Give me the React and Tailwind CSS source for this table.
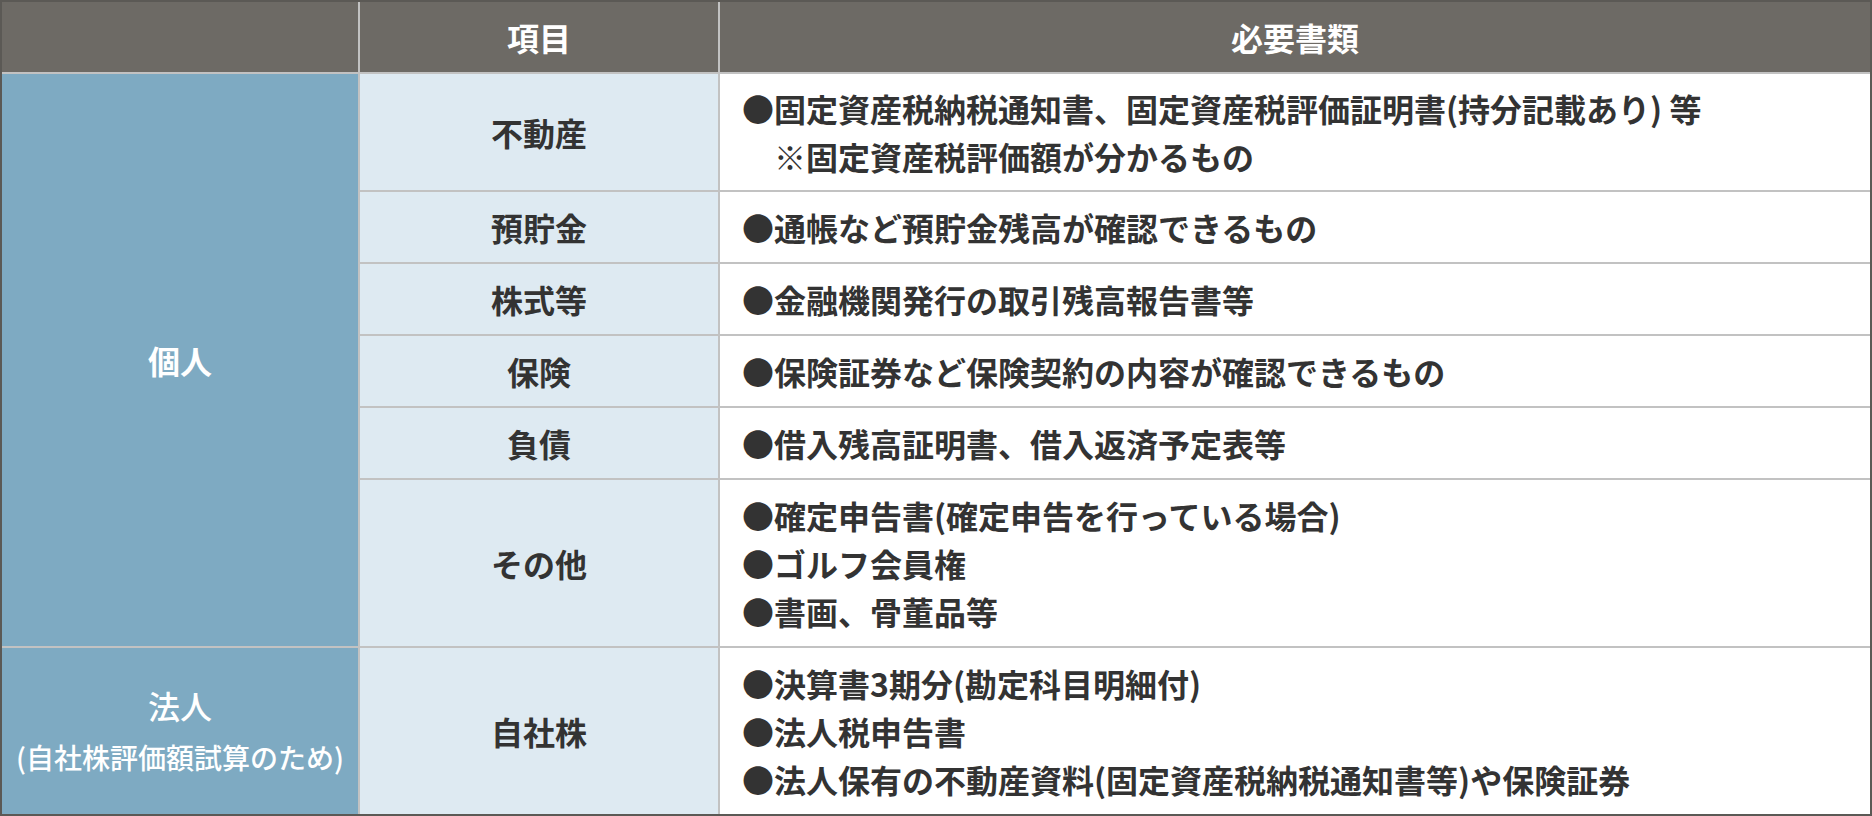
import React from "react";

const rows = [
  {
    item: "不動産",
    docs: [
      { text: "●固定資産税納税通知書、固定資産税評価証明書(持分記載あり) 等" },
      { text: "※固定資産税評価額が分かるもの", indent: true },
    ],
  },
  { item: "預貯金", docs: [{ text: "●通帳など預貯金残高が確認できるもの" }] },
  { item: "株式等", docs: [{ text: "●金融機関発行の取引残高報告書等" }] },
  { item: "保険", docs: [{ text: "●保険証券など保険契約の内容が確認できるもの" }] },
  { item: "負債", docs: [{ text: "●借入残高証明書、借入返済予定表等" }] },
  {
    item: "その他",
    docs: [
      { text: "●確定申告書(確定申告を行っている場合)" },
      { text: "●ゴルフ会員権" },
      { text: "●書画、骨董品等" },
    ],
  },
];

const corp = {
  item: "自社株",
  docs: [
    { text: "●決算書3期分(勘定科目明細付)" },
    { text: "●法人税申告書" },
    { text: "●法人保有の不動産資料(固定資産税納税通知書等)や保険証券" },
  ],
};

function ItemCell({ children }) {
  return (
    <div className="bg-[#deeaf2] flex items-center justify-center text-[#333333] font-bold">
      {children}
    </div>
  );
}

function DocsCell({ docs }) {
  return (
    <div className="bg-white flex flex-col justify-center pl-[22px] text-[#333333] font-bold">
      {docs.map((d, i) => (
        <p key={i} className={d.indent ? "pl-[32px]" : ""}>
          {d.text}
        </p>
      ))}
    </div>
  );
}

export default function App() {
  return (
    <div className="w-[1872px] h-[816px] border-2 border-[#5b5955] bg-[#c2c2c2] font-['Noto_Sans_CJK_JP',sans-serif] text-[32px] leading-[48px]">
      <div className="grid grid-cols-[356px_358px_1150px] grid-rows-[70px_116px_70px_70px_70px_70px_166px_166px] gap-[2px] h-full">
        <div className="bg-[#6d6a65]" />
        <div className="bg-[#6d6a65] flex items-center justify-center text-white font-bold">項目</div>
        <div className="bg-[#6d6a65] flex items-center justify-center text-white font-bold">必要書類</div>

        <div className="row-span-6 bg-[#7eaac2] flex items-center justify-center text-white font-bold">
          個人
        </div>
        {rows.map((r) => (
          <React.Fragment key={r.item}>
            <ItemCell>{r.item}</ItemCell>
            <DocsCell docs={r.docs} />
          </React.Fragment>
        ))}

        <div className="bg-[#7eaac2] flex flex-col items-center justify-center text-white font-medium">
          <p className="leading-[48px]">法人</p>
          <p className="text-[28px] leading-[48px] mt-[4px]">(自社株評価額試算のため)</p>
        </div>
        <ItemCell>{corp.item}</ItemCell>
        <DocsCell docs={corp.docs} />
      </div>
    </div>
  );
}
